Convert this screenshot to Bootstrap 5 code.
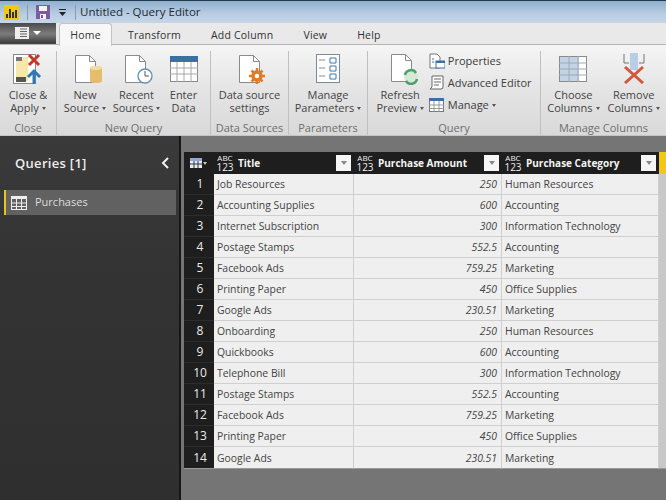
<!DOCTYPE html>
<html lang="en">
<head>
    <meta charset="UTF-8">
    <title>Untitled - Query Editor</title>
    <link href="https://cdn.jsdelivr.net/npm/bootstrap@5.3.0/dist/css/bootstrap.min.css" rel="stylesheet">
    <style>
        html, body { height: 100%; }
        body {
            width: 666px; height: 500px; overflow: hidden;
            font-family: "Open Sans", "Noto Sans", sans-serif;
            font-size: 11px; color: #3c3c3c; background: #757575;
        }
        .title-bar {
            height: 23px; border-top: 1px solid #23394c;
            background: linear-gradient(#8fb0cf, #b9cde2 60%, #c6d6e6);
            color: #1e2a35; font-size: 11.5px; padding-left: 4px;
        }
        .pbi-logo { width: 15px; height: 15px; background: #f2c811; align-items: flex-end; justify-content: center; gap: 1px; padding-bottom: 2px; }
        .pbi-logo i { display: block; width: 2px; background: #333; }
        .tbar-sep { width: 1px; height: 15px; background: #8b9bab; margin: 0 8px; }
        .tab-row { height: 22px; background: #e9e9e9; border-bottom: 1px solid #b5b5b5; }
        .file-btn {
            width: 56px; height: 100%; border-bottom: 1px solid #444; margin-right: 2px;
            background: linear-gradient(#4a4a4a, #7c7c7c 55%, #3e3e3e);
            justify-content: center; align-items: center; gap: 4px;
        }
        .tab-item { padding: 0 15px; line-height: 24px; font-size: 10.5px; color: #333; letter-spacing: .2px; }
        .tab-item.on { background: #f7f7f7; border: 1px solid #c4c4c4; border-bottom: 0; border-radius: 3px 3px 0 0; height: 23px; padding: 0 10px; margin-right: 1px; margin-left: 1px; width: 53px; text-align: center; line-height: 23px; z-index: 1; }
        .rib {
            height: 91px; background: linear-gradient(#f5f5f5, #e3e3e3 55%, #d9d9d9);
            border-bottom: 1px solid #c5c5c5;
        }
        .rib-grp { flex: none; border-right: 1px solid #c0c0c0; margin-top: 6px; height: 84px; }
        .rib-grp:last-child { border-right: 0; }
        .rib-tools { flex: 1; justify-content: center; margin-top: -1px; }
        .rib-btn { text-align: center; line-height: 13px; color: #444; flex: none; }
        .rib-ic { height: 37px; display: flex; align-items: center; justify-content: center; margin-bottom: 1px; }
        .grp-name { text-align: center; color: #6f6f6f; height: 14px; line-height: 14px; }
        .caret-s { display: inline-block; border: 2.5px solid transparent; border-top: 3px solid #555; border-bottom: 0; vertical-align: 2px; margin-left: 3px; }
        .w-close { width: 57px; } .w-newq { width: 154px; } .w-ds { width: 78px; }
        .w-par { width: 79px; } .w-qry { width: 173px; } .w-cols { width: 125px; }
        .newq-tools { justify-content: flex-start; padding-left: 5px; gap: 4px; }
        .b-new { width: 46px; } .b-recent { width: 49px; } .b-enter { width: 37px; }
        .side-item { height: 22px; gap: 3px; white-space: nowrap; }
        .main-area { height: 364px; }
        .q-side {
            width: 181px; flex: none; color: #e6e6e6;
            background: linear-gradient(#3a3a3a, #333 40%, #2f2f2f);
            border-right: 2px solid #161616;
        }
        .q-head { height: 54px; padding: 17px 10px 0 15px; font-size: 13px; font-weight: 600; line-height: 20px; color: #eee; letter-spacing: .3px; }
        .q-row { height: 25px; margin: 0 3px 0 4px; background: #616161; border-left: 2px solid #e8c21e; padding-left: 5px; gap: 8px; color: #ddd; font-size: 11px; }
        .data-wrap { padding: 16px 0 0 3px; min-width: 0; flex: 1; }
        .q-table { table-layout: fixed; width: 482px; border-collapse: separate; border-spacing: 0; font-size: 10.4px; }
        .q-table th { height: 22px; background: #1e1e1e; color: #f4f4f4; padding: 0; font-size: 10px; font-weight: 700; white-space: nowrap; }
        .q-table th.scroll-head { background: #f2c811; }
        .q-table td { height: 21px; padding: 0 3px; background: #efefef; color: #444; border: 0; border-right: 1px solid #cfcfcf; border-bottom: 1px solid #cfcfcf; white-space: nowrap; overflow: hidden; line-height: 20px; }
        .q-table td.idx { background: #1e1e1e; color: #ececec; text-align: center; font-size: 12px; border: 0; border-bottom: 1px solid #2c2c2c; padding: 0 0 0 2px; }
        .q-table td.num { text-align: right; font-style: italic; padding-right: 4px; }
        .q-table td.scroll-cell { background: #c8c8c8; border: 0; }
        .q-table tr:last-child td { height: 22px; border-bottom: 1px solid #999; }
        .th-in { height: 22px; padding: 0 3px 0 2px; gap: 4px; }
        .type-ic { font-size: 8px; line-height: 8px; font-weight: 400; text-align: center; flex: none; width: 18px; color: #f0f0f0; }
        .type-ic b { display: block; font-weight: 400; font-size: 10px; line-height: 10px; }
        .filter-b { width: 15px; height: 16px; background: #f6f6f6; flex: none; margin-left: auto; display: flex; align-items: center; justify-content: center; }
        .filter-b i { border: 3px solid transparent; border-top: 4px solid #888; border-bottom: 0; display: block; }
    </style>
</head>
<body>
    <!-- title bar -->
    <div class="title-bar d-flex align-items-center">
        <div class="pbi-logo d-flex"><i style="height:4px"></i><i style="height:9px"></i><i style="height:6px"></i><i style="height:8px"></i></div>
        <div class="tbar-sep"></div>
        <svg width="14" height="14" viewBox="0 0 14 14"><rect width="14" height="14" fill="#7b5aa6"/><rect x="3" y="1" width="8" height="5" fill="#f4f4f4"/><rect x="4" y="9" width="6" height="5" fill="#f4f4f4"/><rect x="5" y="10" width="2" height="3" fill="#7b5aa6"/></svg>
        <svg class="ms-2" width="9" height="9" viewBox="0 0 9 9"><rect x="1" y="1" width="7" height="1" fill="#222"/><path d="M1 4h7L4.500 8z" fill="#222"/></svg>
        <div class="tbar-sep ms-2 me-1"></div>
        <span>Untitled - Query Editor</span>
    </div>

    <!-- tabs -->
    <div class="tab-row d-flex">
        <div class="file-btn d-flex">
            <svg width="14" height="12" viewBox="0 0 14 12"><rect width="14" height="12" fill="#eee"/><path d="M5 2h7M5 4.500h7M5 7h7M5 9.500h7" stroke="#666"/></svg>
            <span class="caret-s m-0" style="border-top-color:#fff;border-width:4px 4px 0"></span>
        </div>
        <div class="tab-item on">Home</div>
        <div class="tab-item">Transform</div>
        <div class="tab-item">Add Column</div>
        <div class="tab-item">View</div>
        <div class="tab-item">Help</div>
    </div>

    <!-- ribbon -->
    <div class="rib d-flex">
        <div class="rib-grp w-close d-flex flex-column">
            <div class="rib-tools d-flex">
                <div class="rib-btn">
                    <div class="rib-ic"><svg width="30" height="32" viewBox="0 0 30 32"><rect x=".5" y="1.500" width="22" height="29" fill="#fff" stroke="#8a8a8a"/><rect x="3" y="4" width="12" height="24" fill="#f7e7a8"/><rect x="3" y="4" width="6" height="4" fill="#777"/><rect x="3" y="24" width="10" height="5" fill="#555"/><path d="M16 2l10 10M26 2L16 12" stroke="#c8352c" stroke-width="3"/><path d="M21 31V19M15 24l6-6 6 6" stroke="#2f79b5" stroke-width="3" fill="none"/></svg></div>
                    Close &amp;<br>Apply<span class="caret-s"></span>
                </div>
            </div>
            <div class="grp-name">Close</div>
        </div>
        <div class="rib-grp w-newq d-flex flex-column">
            <div class="rib-tools newq-tools d-flex">
                <div class="rib-btn b-new">
                    <div class="rib-ic"><svg width="34" height="30" viewBox="0 0 34 30"><path d="M7.500 1.500h14l6 6v21h-20z" fill="#fff" stroke="#8a8a8a"/><path d="M21.500 1.500v6h6" fill="none" stroke="#8a8a8a"/><path d="M22 14a6 2 0 0 1 12 0v13a6 2 0 0 1-12 0z" fill="#e5bd6d"/><ellipse cx="28" cy="14" rx="6" ry="2" fill="#f3dca6"/></svg></div>
                    New<br>Source<span class="caret-s"></span>
                </div>
                <div class="rib-btn b-recent">
                    <div class="rib-ic"><svg width="34" height="30" viewBox="0 0 34 30"><path d="M5.500 1.500h14l6 6v21h-20z" fill="#fff" stroke="#8a8a8a"/><path d="M19.500 1.500v6h6" fill="none" stroke="#8a8a8a"/><circle cx="25" cy="22" r="7" fill="#fff" stroke="#5f8fb4" stroke-width="1.300"/><path d="M25 17v5h4" fill="none" stroke="#555"/></svg></div>
                    Recent<br>Sources<span class="caret-s"></span>
                </div>
                <div class="rib-btn b-enter">
                    <div class="rib-ic"><svg width="28" height="26" viewBox="0 0 28 26"><rect x=".5" y=".5" width="27" height="25" fill="#fff" stroke="#8a8a8a"/><rect width="28" height="6" fill="#3f6ea3"/><path d="M0 12h28M0 18h28M7 6v20M14 6v20M21 6v20" stroke="#a8a8a8"/></svg></div>
                    Enter<br>Data
                </div>
            </div>
            <div class="grp-name">New Query</div>
        </div>
        <div class="rib-grp w-ds d-flex flex-column">
            <div class="rib-tools d-flex">
                <div class="rib-btn">
                    <div class="rib-ic"><svg width="34" height="30" viewBox="0 0 34 30"><path d="M6.500 1.500h14l6 6v21h-20z" fill="#fff" stroke="#8a8a8a"/><path d="M20.500 1.500v6h6" fill="none" stroke="#8a8a8a"/><circle cx="24" cy="22" r="4" fill="none" stroke="#e07b28" stroke-width="3.500"/><path d="M24 14v3M24 27v3M16 22h3M29 22h3M18.500 16.500l2 2M27.500 25.500l2 2M18.500 27.500l2-2M27.500 18.500l2-2" stroke="#e07b28" stroke-width="2.500"/></svg></div>
                    Data source<br>settings
                </div>
            </div>
            <div class="grp-name">Data Sources</div>
        </div>
        <div class="rib-grp w-par d-flex flex-column">
            <div class="rib-tools d-flex">
                <div class="rib-btn">
                    <div class="rib-ic"><svg width="24" height="29" viewBox="0 0 24 29"><rect x=".5" y=".5" width="23" height="28" fill="#fff" stroke="#7b8a95"/><path d="M3 6h6M3 14h6M3 22h6" stroke="#888"/><path d="M14 4h6v5h-6zM14 12h6v5h-6zM14 20h6v5h-6z" fill="#fff" stroke="#3f79a8"/></svg></div>
                    Manage<br>Parameters<span class="caret-s"></span>
                </div>
            </div>
            <div class="grp-name">Parameters</div>
        </div>
        <div class="rib-grp w-qry d-flex flex-column">
            <div class="rib-tools d-flex" style="gap:5px">
                <div class="rib-btn">
                    <div class="rib-ic"><svg width="40" height="32" viewBox="0 0 40 32"><path d="M11.500 1.500h14l6 6v21h-20z" fill="#fff" stroke="#8a8a8a"/><path d="M25.500 1.500v6h6" fill="none" stroke="#8a8a8a"/><circle cx="31" cy="24" r="7" fill="#d7e8d5"/><path d="M25 22a6 6 0 0 1 11-2M37 26a6 6 0 0 1-11 2" fill="none" stroke="#48a06a" stroke-width="2.500"/></svg></div>
                    Refresh<br>Preview<span class="caret-s"></span>
                </div>
                <div class="d-flex flex-column">
                    <div class="side-item d-flex align-items-center"><svg width="16" height="16" viewBox="0 0 16 16"><path d="M1 1h7l3 3v11H1z" fill="#fff" stroke="#777"/><path d="M3 6h2M3 9h2" stroke="#3f6ea3"/><rect x="7" y="8" width="9" height="7" fill="#fff" stroke="#3f6ea3"/><rect x="7" y="8" width="9" height="2" fill="#3f6ea3"/></svg>Properties</div>
                    <div class="side-item d-flex align-items-center"><svg width="16" height="16" viewBox="0 0 16 16"><path d="M3 1h11v11a2 2 0 0 1-2 2H1l2-2z" fill="#fff" stroke="#666"/><path d="M5 4h7M5 7h7M5 10h5" stroke="#666"/></svg>Advanced Editor</div>
                    <div class="side-item d-flex align-items-center"><svg width="16" height="14" viewBox="0 0 16 14"><rect x=".5" y=".5" width="14" height="13" fill="#fff" stroke="#777"/><rect width="15" height="3" fill="#3f6ea3"/><path d="M0 7h15M0 10.500h15M5 3v11M10 3v11" stroke="#999"/></svg>Manage<span class="caret-s m-0"></span></div>
                </div>
            </div>
            <div class="grp-name">Query</div>
        </div>
        <div class="rib-grp w-cols d-flex flex-column">
            <div class="rib-tools d-flex" style="gap:8px">
                <div class="rib-btn">
                    <div class="rib-ic"><svg width="28" height="26" viewBox="0 0 28 26"><rect x=".5" y=".5" width="27" height="25" fill="#fff" stroke="#8a8a8a"/><rect x="1" y="1" width="19" height="24" fill="#c2d3e5"/><path d="M0 7h28M0 13h28M0 19h28M10 0v26M19 0v26" stroke="#9fa9b3"/></svg></div>
                    Choose<br>Columns<span class="caret-s"></span>
                </div>
                <div class="rib-btn">
                    <div class="rib-ic"><svg width="24" height="31" viewBox="0 0 24 31"><path d="M2 1v9h5M22 1v9h-5" fill="none" stroke="#777"/><rect x="8" y="0" width="8" height="17" fill="#b8cee4"/><path d="M3 14l18 16M21 14L3 30" stroke="#d2573b" stroke-width="3"/></svg></div>
                    Remove<br>Columns<span class="caret-s"></span>
                </div>
            </div>
            <div class="grp-name">Manage Columns</div>
        </div>
    </div>

    <!-- queries pane + data preview -->
    <div class="main-area d-flex">
        <div class="q-side">
            <div class="q-head d-flex justify-content-between">
                <span>Queries [1]</span>
                <svg class="mt-1" width="8" height="12" viewBox="0 0 8 12"><path d="M7 1L2 6l5 5" fill="none" stroke="#f0f0f0" stroke-width="2"/></svg>
            </div>
            <div class="q-row d-flex align-items-center">
                <svg width="16" height="14" viewBox="0 0 16 14"><rect x=".5" y=".5" width="15" height="13" fill="none" stroke="#eee"/><rect width="16" height="3" fill="#eee"/><path d="M0 7h16M0 10.500h16M5.500 3v11M10.500 3v11" stroke="#eee"/></svg>
                Purchases
            </div>
        </div>
        <div class="data-wrap d-flex align-items-start">
            <table class="q-table">
                <colgroup><col style="width:30px"><col style="width:140px"><col style="width:148px"><col style="width:157px"><col style="width:7px"></colgroup>
                <thead>
                    <tr>
                        <th><div class="th-in d-flex align-items-center justify-content-center" style="gap:1px"><svg width="12" height="10" viewBox="0 0 12 10"><rect width="12" height="10" fill="#e8ecf2"/><rect width="12" height="3" fill="#8fa9d0"/><path d="M0 6h12M4 3v7M8 3v7" stroke="#33373d"/></svg><span class="caret-s m-0" style="border-top-color:#ccc"></span></div></th>
                        <th><div class="th-in d-flex align-items-center"><span class="type-ic">ABC<b>123</b></span>Title<span class="filter-b"><i></i></span></div></th>
                        <th><div class="th-in d-flex align-items-center"><span class="type-ic">ABC<b>123</b></span>Purchase Amount<span class="filter-b"><i></i></span></div></th>
                        <th><div class="th-in d-flex align-items-center"><span class="type-ic">ABC<b>123</b></span>Purchase Category<span class="filter-b"><i></i></span></div></th>
                        <th class="scroll-head"></th>
                    </tr>
                </thead>
                <tbody id="rows"></tbody>
            </table>
        </div>
    </div>

    <script>
        const purchases = [
            ['Job Resources', '250', 'Human Resources'],
            ['Accounting Supplies', '600', 'Accounting'],
            ['Internet Subscription', '300', 'Information Technology'],
            ['Postage Stamps', '552.5', 'Accounting'],
            ['Facebook Ads', '759.25', 'Marketing'],
            ['Printing Paper', '450', 'Office Supplies'],
            ['Google Ads', '230.51', 'Marketing'],
            ['Onboarding', '250', 'Human Resources'],
            ['Quickbooks', '600', 'Accounting'],
            ['Telephone Bill', '300', 'Information Technology'],
            ['Postage Stamps', '552.5', 'Accounting'],
            ['Facebook Ads', '759.25', 'Marketing'],
            ['Printing Paper', '450', 'Office Supplies'],
            ['Google Ads', '230.51', 'Marketing']
        ];
        document.getElementById('rows').innerHTML = purchases.map((p, i) =>
            `<tr><td class="idx">${i + 1}</td><td>${p[0]}</td><td class="num">${p[1]}</td><td>${p[2]}</td><td class="scroll-cell"></td></tr>`
        ).join('');
    </script>
    <script src="https://cdn.jsdelivr.net/npm/bootstrap@5.3.0/dist/js/bootstrap.bundle.min.js"></script>
</body>
</html>
